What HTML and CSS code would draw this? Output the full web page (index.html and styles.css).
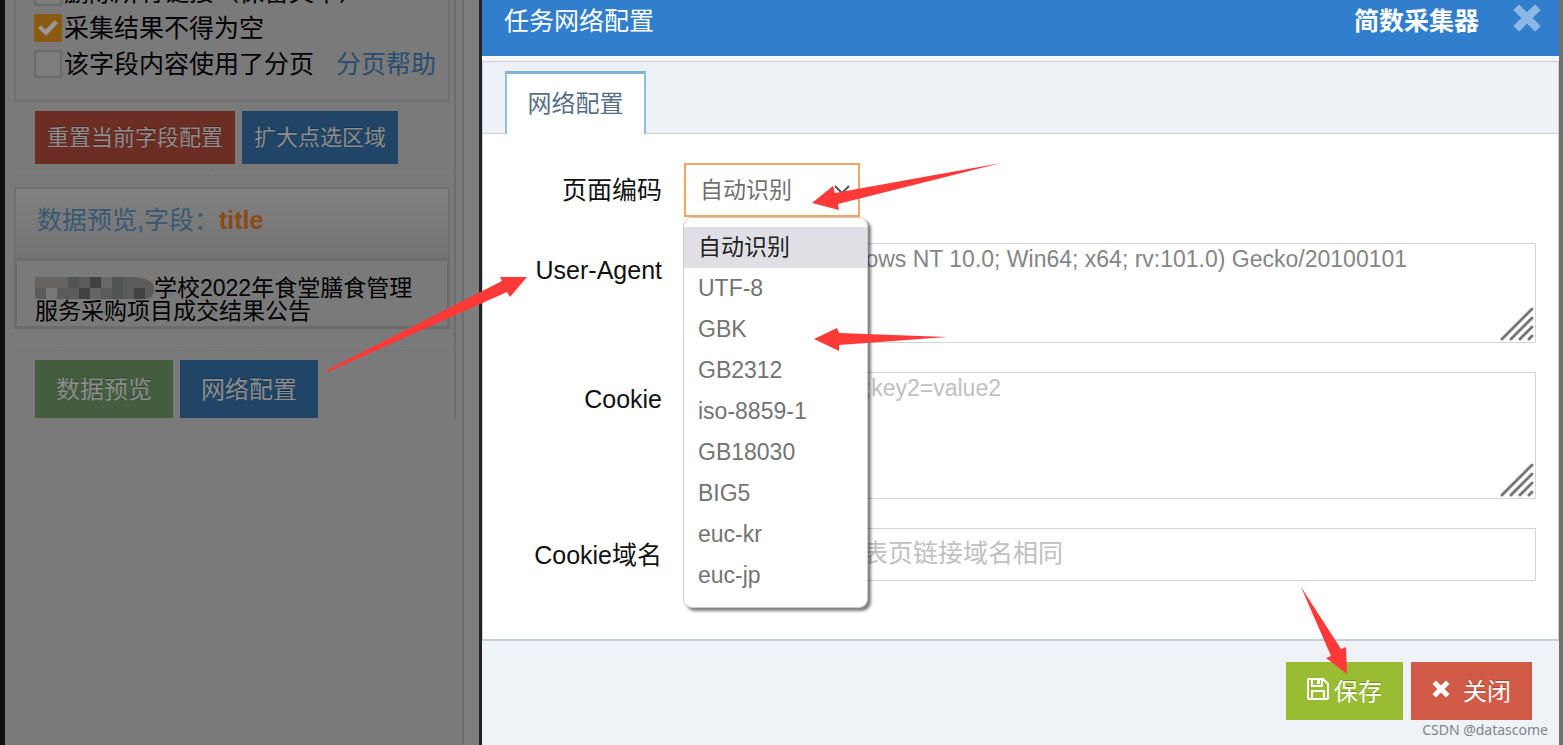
FILE: index.html
```html
<!DOCTYPE html>
<html lang="zh-CN">
<head>
    <meta charset="UTF-8">
    <meta name="viewport" content="width=device-width, initial-scale=1.0">
    <title>任务网络配置</title>
    <link rel="stylesheet" href="styles.css">
</head>
<body>
    <aside class="sidebar">
        <div class="panel">
            <div class="options">
                <div class="option-row">
                    <input type="checkbox" id="del-links">
                    <label for="del-links">删除所有链接（保留文本）</label>
                </div>
                <div class="option-row">
                    <input type="checkbox" id="not-empty" checked>
                    <label for="not-empty">采集结果不得为空</label>
                </div>
                <div class="option-row">
                    <input type="checkbox" id="use-paging">
                    <label for="use-paging">该字段内容使用了分页</label>
                    <a href="#">分页帮助</a>
                </div>
            </div>
            <div class="btn-row">
                <button type="button" class="btn small dim-red">重置当前字段配置</button>
                <button type="button" class="btn small dim-blue">扩大点选区域</button>
            </div>
            <div class="preview">
                <div class="preview-title">数据预览,字段：<b>title</b></div>
                <div class="preview-text"><span class="mosaic"><svg viewBox="0 0 119 23" width="119" height="23">
                    <path d="M3 0H98Q119 1 119 12T108 22H3Q0 22 0 19V3Q0 0 3 0z" fill="#5b5b5b"/>
                    <path fill="#666460" d="M3 0h30v11H0V3zM55 11h11v11H55z"/>
                    <path fill="#787878" d="M11 11h11v11H11z"/>
                    <path fill="#686868" d="M66 0h11v11H66z"/>
                    <path fill="#424242" d="M55 0h11v11H55zM99 11h11v11H99zM44 11h11v11H44z"/>
                    <path fill="#505452" d="M77 0h11v11H77zM33 0h11v11H33zM77 11h11v11H77z"/>
                </svg></span>学校2022年食堂膳食管理服务采购项目成交结果公告</div>
            </div>
            <div class="btn-row">
                <button type="button" class="btn dim-green">数据预览</button>
                <button type="button" class="btn dim-blue">网络配置</button>
            </div>
        </div>
        <div class="scrollbar"></div>
    </aside>

    <main class="modal">
        <header class="modal-header">
            <h1>任务网络配置</h1>
            <span class="brand">简数采集器</span>
            <button type="button" class="close" aria-label="关闭窗口">
                <svg viewBox="0 0 28 28" width="28" height="28"><path d="M6 6l16 16M22 6L6 22" stroke="currentColor" stroke-width="8" stroke-linecap="square"/></svg>
            </button>
        </header>

        <div class="tabbox">
            <nav class="tabs">
                <a href="#" class="tab">网络配置</a>
            </nav>
            <form class="form">
                <div class="form-row encoding">
                    <label for="encoding">页面编码</label>
                    <div class="select">
                        <select id="encoding">
                            <option>自动识别</option>
                            <option>UTF-8</option>
                            <option>GBK</option>
                            <option>GB2312</option>
                        </select>
                        <svg class="chevron" viewBox="0 0 16 10" width="16" height="10"><path d="M1 1l7 7 7-7" fill="none" stroke="#555" stroke-width="2"/></svg>
                        <ul class="menu">
                            <li class="selected">自动识别</li>
                            <li>UTF-8</li>
                            <li>GBK</li>
                            <li>GB2312</li>
                            <li>iso-8859-1</li>
                            <li>GB18030</li>
                            <li>BIG5</li>
                            <li>euc-kr</li>
                            <li>euc-jp</li>
                        </ul>
                    </div>
                </div>
                <div class="form-row">
                    <label for="agent">User-Agent</label>
                    <div class="field">
                        <textarea id="agent" class="agent">Mozilla/5.0 (Windows NT 10.0; Win64; x64; rv:101.0) Gecko/20100101</textarea>
                        <svg class="grip" viewBox="0 0 34 34" width="34" height="34"><path d="M2 32L32 2M11 32l21-21M20 32l12-12M29 32l3-3" stroke="#777" stroke-width="3" stroke-linecap="round"/></svg>
                    </div>
                </div>
                <div class="form-row">
                    <label for="cookie">Cookie</label>
                    <div class="field">
                        <textarea id="cookie" class="cookie" placeholder="格式key1=value1;key2=value2"></textarea>
                        <svg class="grip" viewBox="0 0 34 34" width="34" height="34"><path d="M2 32L32 2M11 32l21-21M20 32l12-12M29 32l3-3" stroke="#777" stroke-width="3" stroke-linecap="round"/></svg>
                    </div>
                </div>
                <div class="form-row">
                    <label for="domain">Cookie域名</label>
                    <div class="field">
                        <input type="text" id="domain" placeholder="不填则默认与列表页链接域名相同">
                    </div>
                </div>
            </form>
        </div>

        <footer class="modal-footer">
            <button type="button" class="btn save">
                <svg viewBox="0 0 22 22" width="22" height="22" fill="none" stroke="#fff" stroke-width="2"><path d="M2 1h14l5 5v14q0 1-1 1H2q-1 0-1-1V2q0-1 1-1zM5 1v7h10V1M5 21v-8h12v8"/><path d="M10 2h3v4h-3z" fill="#fff" stroke="none"/></svg>
                <span>保存</span>
            </button>
            <button type="button" class="btn cancel">
                <svg viewBox="0 0 18 18" width="18" height="18"><path d="M4 4l10 10M14 4L4 14" stroke="#fff" stroke-width="5" stroke-linecap="square"/></svg>
                <span>关闭</span>
            </button>
        </footer>
    </main>

    <svg class="arrows" width="1563" height="745" fill="#ff3938">
        <path d="M812 203L833 186 835 193 1001 163 838 204 839 210z"/>
        <path d="M814 339L837 328 839 333 947 337 839 345 839 351z"/>
        <path d="M527 277L500 277 502 281 327 370 328 372 507 292 510 297z"/>
        <path d="M1347 674L1346 647 1341 649 1301 587 1331 656 1326 658z"/>
    </svg>
    <div class="watermark">CSDN @datascome</div>
</body>
</html>
```
FILE: styles.css
```css
* {
    box-sizing: border-box;
}
body {
    margin: 0;
    height: 100vh;
    overflow: hidden;
    position: relative;
    display: flex;
    font-family: "Liberation Sans", "Noto Sans CJK SC", sans-serif;
    font-size: 25px;
    color: #111;
    background: #6f6f6b;
}
a {
    text-decoration: none;
}
button, input, select, textarea {
    font-family: inherit;
    margin: 0;
    border-radius: 0;
}

/* left page, darkened by the modal backdrop */
.sidebar {
    flex: 0 0 482px;
    display: flex;
    border-left: 5px solid #111;
    border-right: 3px solid #222;
    background: #7a7a7a;
    color: #000;
}
.panel {
    width: 451px;
    height: 419px;
    padding-left: 9px;
    padding-right: 4px;
    border-right: 2px solid #6d6d6d;
}
.scrollbar {
    flex: 1;
    margin-left: 6px;
    border-left: 2px solid #6d6d6d;
    background: #7e7e7e;
}
.options {
    margin-top: -26px;
    padding: 0 0 18px 18px;
    border: 2px solid #707070;
    border-top: 0;
}
.option-row {
    display: flex;
    align-items: center;
    gap: 2px;
    height: 36px;
    white-space: nowrap;
}
.option-row label, .option-row a {
    line-height: 32px;
    padding-bottom: 1px;
}
.option-row input {
    appearance: none;
    flex: none;
    width: 28px;
    height: 28px;
    border: 2px solid #6b6b6b;
    background: #7d7d7d;
}
.option-row input:checked {
    border-color: #8a5a12;
    background: #8a5a12;
}
.option-row input:checked::before {
    content: "";
    display: block;
    width: 20px;
    height: 16px;
    margin: 4px 2px;
    background: #999;
    clip-path: polygon(0 50%, 15% 35%, 38% 60%, 84% 2%, 100% 20%, 40% 98%);
}
.option-row a {
    margin-left: 20px;
    color: #294d70;
}
.btn-row {
    display: flex;
    gap: 7px;
    padding: 9px 0 0 21px;
}
.btn {
    height: 58px;
    padding: 0 21px 4px;
    border: 0;
    font-size: 24px;
    white-space: nowrap;
    color: #fff;
    text-shadow: 0 -1px 0 rgba(0, 0, 0, 0.25);
}
.small {
    height: 53px;
    padding: 0 12px 6px;
    font-size: 22px;
}
.sidebar .btn {
    color: #8d8d8d;
}
.dim-red {
    background: #6b2d24;
}
.dim-blue {
    background: #214566;
}
.dim-green {
    background: #445d3f;
}
.preview {
    margin-top: 11px;
    padding: 11px 0 21px;
    border-top: 1px dashed #727272;
    border-bottom: 1px dashed #727272;
}
.preview-title {
    height: 71px;
    padding-left: 21px;
    line-height: 62px;
    border: 2px solid #707070;
    border-bottom: 0;
    background: linear-gradient(#808080, #747474);
    color: #385871;
}
.preview-title b {
    color: #8c4a14;
}
.preview-text {
    padding: 16px 18px 3px;
    border: 3px solid #6c6c6c;
    font-size: 23px;
    line-height: 23px;
}
.mosaic svg {
    display: inline-block;
    vertical-align: top;
}

/* modal */
.modal {
    flex: 1;
    min-width: 0;
    margin-right: 4px;
    display: flex;
    flex-direction: column;
    background: #eff2f7;
}
.modal-header {
    display: flex;
    align-items: center;
    height: 56px;
    padding: 0 18px 18px 22px;
    background: #317ecd;
    color: #fff;
}
.modal-header h1 {
    flex: 1;
    margin: 0;
    font-size: 25px;
    font-weight: normal;
}
.brand {
    font-weight: bold;
}
.close {
    display: flex;
    margin-left: 34px;
    padding: 0 0 2px;
    border: 0;
    background: none;
    color: #8db7e5;
}
.tabbox {
    border-top: 5px solid #f6f6f6;
}
.tabs {
    height: 73px;
    padding: 9px 22px 0;
    border: 1px solid #c5d0dc;
    background: #edf1f6;
}
.tab {
    display: block;
    width: 141px;
    height: 63px;
    border: 2px solid #8fc0e0;
    border-top: 3px solid #7db4d8;
    border-bottom: 0;
    background: #fff;
    color: #576f87;
    font-size: 24px;
    line-height: 60px;
    text-align: center;
}
.form {
    display: flex;
    flex-direction: column;
    gap: 29px;
    padding: 29px 22px 56px 0;
    border: 1px solid #c5d0dc;
    border-top: 0;
    border-bottom-width: 2px;
    background: #fff;
}
.form-row {
    display: flex;
    gap: 22px;
}
.encoding {
    margin-bottom: -3px;
}
.form-row label {
    flex: 0 0 179px;
    line-height: 55px;
    text-align: right;
}
.select {
    position: relative;
}
.select select {
    appearance: none;
    display: block;
    width: 176px;
    height: 54px;
    padding: 0 14px;
    border: 2px solid #f2a55e;
    background: #fff;
    color: #707070;
    font-size: 23px;
}
.encoding label, .encoding .select {
    height: 54px;
}
.chevron {
    position: absolute;
    right: 10px;
    top: 22px;
}
.menu {
    position: absolute;
    z-index: 1;
    top: 54px;
    left: -1px;
    width: 185px;
    margin: 0;
    padding: 9px 0 11px;
    list-style: none;
    border: 1px solid #ccc;
    border-radius: 9px;
    background: #fff;
    box-shadow: 3px 3px 3px rgba(0, 0, 0, 0.5);
    color: #737373;
    font-size: 23px;
    line-height: 41px;
}
.menu li {
    padding-left: 14px;
}
.menu .selected {
    background: #e0dfe6;
    color: #222;
}
.field {
    flex: 1;
    min-width: 0;
    position: relative;
}
.field textarea, .field input {
    display: block;
    width: 100%;
    border: 1px solid #d5d5d5;
    background: #fff;
    color: #858585;
}
.field textarea {
    resize: none;
    padding: 1px 4px;
    font-size: 23px;
    line-height: 28px;
}
.agent {
    height: 100px;
}
.cookie {
    height: 127px;
}
.field input {
    height: 53px;
    padding: 0 3px 3px;
    font-size: 25px;
}
.field ::placeholder {
    color: #c0c0c0;
}
.grip {
    position: absolute;
    right: 2px;
    bottom: 2px;
}
.modal-footer {
    display: flex;
    justify-content: flex-end;
    gap: 8px;
    padding: 21px 27px 0;
}
.modal-footer .btn {
    display: flex;
    align-items: center;
}
.save {
    gap: 5px;
    background: #9abc32;
}
.cancel {
    gap: 13px;
    background: #d15b47;
}
.arrows {
    position: absolute;
    z-index: 2;
    top: 0;
    left: 0;
    pointer-events: none;
}
.watermark {
    position: absolute;
    z-index: 3;
    right: 15px;
    bottom: 4px;
    font-family: "Noto Sans", sans-serif;
    font-size: 14px;
    line-height: 22px;
    color: #808488;
}
```
